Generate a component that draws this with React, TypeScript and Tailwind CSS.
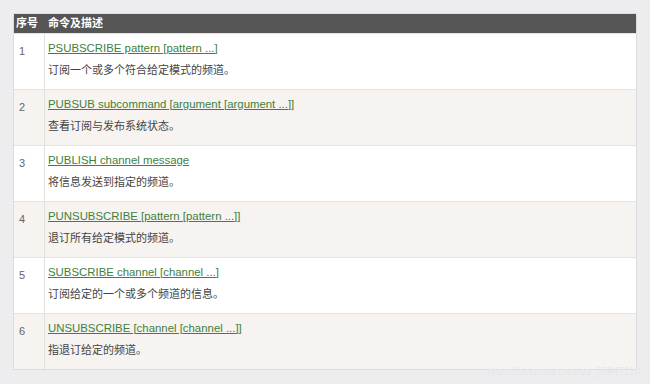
const rows = [
  { cmd: "PSUBSCRIBE pattern [pattern ...]", desc: "订阅一个或多个符合给定模式的频道。" },
  { cmd: "PUBSUB subcommand [argument [argument ...]]", desc: "查看订阅与发布系统状态。" },
  { cmd: "PUBLISH channel message", desc: "将信息发送到指定的频道。" },
  { cmd: "PUNSUBSCRIBE [pattern [pattern ...]]", desc: "退订所有给定模式的频道。" },
  { cmd: "SUBSCRIBE channel [channel ...]", desc: "订阅给定的一个或多个频道的信息。" },
  { cmd: "UNSUBSCRIBE [channel [channel ...]]", desc: "指退订给定的频道。" },
];

export default function App() {
  return (
    <div
      className="w-[650px] h-[384px] bg-[#ededef] pt-[13px] pl-[13px] relative overflow-hidden"
      style={{ fontFamily: '"Liberation Sans", Arial, "Noto Sans CJK SC", sans-serif' }}
    >
      <div className="w-[624px] border border-[#dcdcdc] bg-white">
        {/* header */}
        <div className="flex h-[19px] items-center bg-[#555555] text-white text-[11px] font-bold">
          <div className="w-[31px] pl-[2px]">序号</div>
          <div className="pl-[3px]">命令及描述</div>
        </div>
        {rows.map((r, i) => (
          <div
            key={i}
            className={`flex h-[56px] border-t border-[#e6e2de] ${i % 2 === 1 ? "bg-[#f6f3f0]" : "bg-white"}`}
          >
            <div className="w-[31px] border-r border-[#e3e0dc] pl-[5px] pt-[9px] text-[11px] text-[#666]">
              {i + 1}
            </div>
            <div className="pl-[3px] pt-[8px] flex flex-col gap-[9px]">
              <span className="text-[11.4px] leading-[13px] text-[#408040] underline underline-offset-[1px]">
                {r.cmd}
              </span>
              <span className="text-[11px] leading-[13px] text-[#444]">{r.desc}</span>
            </div>
          </div>
        ))}
      </div>
      <div className="absolute right-[10px] bottom-[5px] text-[10px] text-[#e6e6ea]">
        https://blog.csdn.net/qq_35647110
      </div>
    </div>
  );
}
